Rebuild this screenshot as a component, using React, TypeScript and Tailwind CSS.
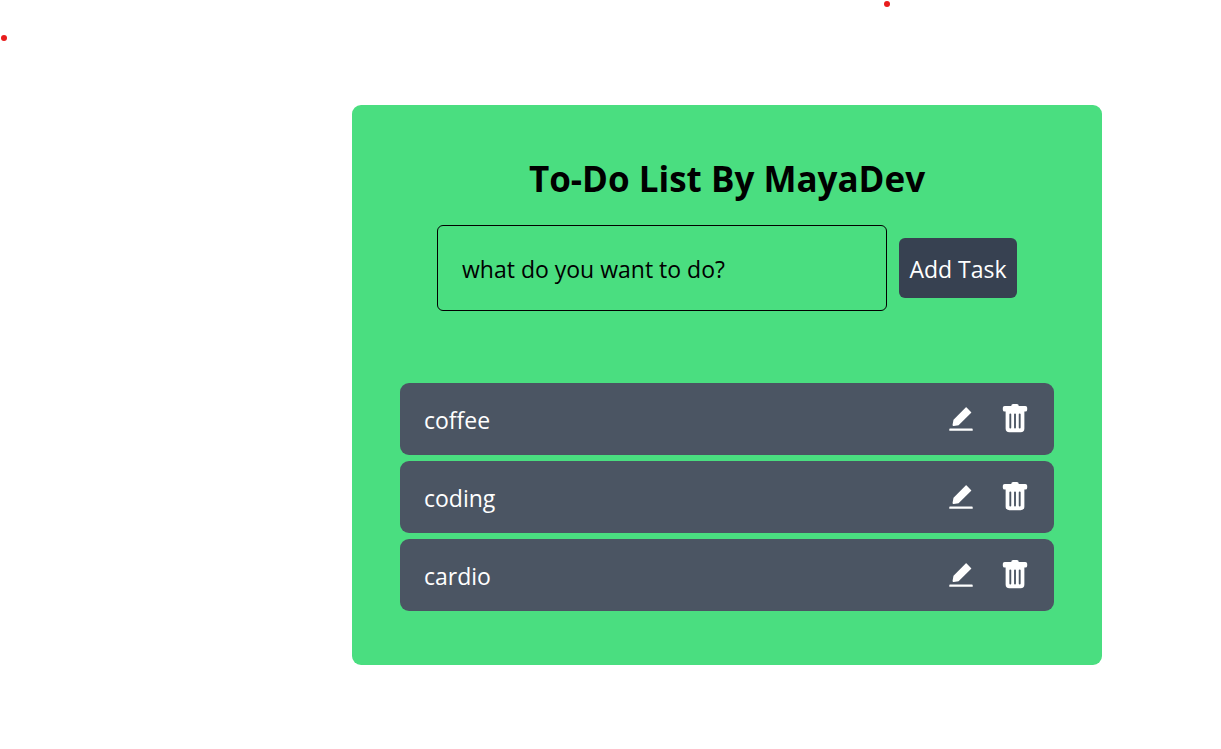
import { useState, type FormEvent } from "react";
import { AiFillEdit } from "react-icons/ai";
import { BsTrashFill } from "react-icons/bs";

function Marker({ className }: { className: string }) {
  return <span aria-hidden="true" className={`absolute size-1.5 rounded-full bg-[#e81c1c] ${className}`} />;
}

function Task({ name, onEdit, onDelete }: { name: string; onEdit: () => void; onDelete: () => void }) {
  return (
    <li className="flex h-[72px] items-center justify-between rounded-[9px] bg-[#4b5563] px-6 text-white">
      <p className="pt-0.5">{name}</p>
      <div className="flex gap-6">
        <button type="button" aria-label={`Edit ${name}`} onClick={onEdit}>
          <AiFillEdit size={30} />
        </button>
        <button type="button" aria-label={`Delete ${name}`} onClick={onDelete}>
          <BsTrashFill size={30} />
        </button>
      </div>
    </li>
  );
}

export default function App() {
  const [tasks, setTasks] = useState(["coffee", "coding", "cardio"]);
  const [draft, setDraft] = useState("");

  const remove = (index: number) => setTasks(tasks.filter((_, i) => i !== index));

  const submit = (event: FormEvent) => {
    event.preventDefault();
    if (!draft.trim()) return;
    setTasks([...tasks, draft.trim()]);
    setDraft("");
  };

  return (
    <div className="relative min-h-screen bg-white pt-[105px] pb-20 pl-[233px] font-['Open_Sans',sans-serif] text-[23px] leading-9 text-black">
      <Marker className="top-[35px] left-px" />
      <Marker className="top-px left-[884px]" />
      <main className="mx-auto w-full max-w-[750px] rounded-[9px] bg-[#4ade80] px-12 pt-12 pb-[54px]">
        <h1 className="text-center text-[35px] leading-[52px] font-bold">To-Do List By MayaDev</h1>
        <form onSubmit={submit} className="mt-5 mb-[72px] flex items-center justify-center gap-3">
          <input
            type="text"
            aria-label="New task"
            placeholder="what do you want to do?"
            value={draft}
            onChange={(event) => setDraft(event.target.value)}
            className="h-[86px] w-[450px] min-w-0 rounded-md border border-black bg-transparent px-6 pt-0.5 placeholder:text-black placeholder:opacity-100"
          />
          <button type="submit" className="h-[60px] w-[118px] shrink-0 rounded-md bg-[#374151] pt-0.5 text-white">
            Add Task
          </button>
        </form>
        <ul className="flex flex-col gap-1.5">
          {tasks.map((task, index) => (
            <Task
              key={task}
              name={task}
              onEdit={() => {
                setDraft(task);
                remove(index);
              }}
              onDelete={() => remove(index)}
            />
          ))}
        </ul>
      </main>
    </div>
  );
}
